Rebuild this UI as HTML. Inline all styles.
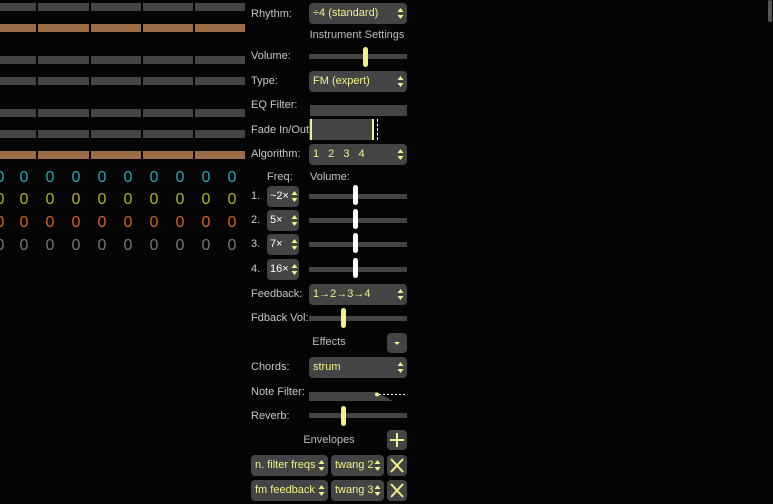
<!DOCTYPE html>
<html><head><meta charset="utf-8"><style>
*{margin:0;padding:0;box-sizing:border-box}
body{width:773px;height:500px;background:#040404;position:relative;overflow:hidden;font-family:"Liberation Sans",sans-serif;font-size:11px;color:#bdbdbd;white-space:nowrap}
.a{position:absolute}
.bar{position:absolute;height:8px;background:#444}
.br{background:#9a6d47}
.d{position:absolute;width:20px;text-align:center;font-size:16px;line-height:16px}
.lbl{position:absolute;left:251px;color:#c8c8c8;font-size:11px;line-height:14px}
.sel{position:absolute;background:#444;border-radius:4px;color:#f2f28c;font-size:11px;line-height:21px;padding-left:4px;height:21px;overflow:hidden}
.sel .ar{position:absolute;right:3px;top:4px;width:7px;height:13px}
.track{position:absolute;left:309px;width:98px;height:5px;background:#444}
.th{position:absolute;width:5px;height:20px;border-radius:3px;background:#f2f28c}
.wt{background:#fff}
.btn{position:absolute;left:387px;width:20px;height:20px;background:#444;border-radius:4px}
.ct{position:absolute;text-align:center;color:#bdbdbd}
</style></head><body>
<div class="a" style="left:768px;top:0;width:4px;height:22px;background:#555;border-radius:2px"></div>

<div class="bar" style="left:0;width:36px;top:3px"></div><div class="bar" style="left:38px;width:51px;top:3px"></div><div class="bar" style="left:91px;width:50px;top:3px"></div><div class="bar" style="left:143px;width:50px;top:3px"></div><div class="bar" style="left:195px;width:50px;top:3px"></div>
<div class="bar br" style="left:0;width:36px;top:24px"></div><div class="bar br" style="left:38px;width:51px;top:24px"></div><div class="bar br" style="left:91px;width:50px;top:24px"></div><div class="bar br" style="left:143px;width:50px;top:24px"></div><div class="bar br" style="left:195px;width:50px;top:24px"></div>
<div class="bar" style="left:0;width:36px;top:56px"></div><div class="bar" style="left:38px;width:51px;top:56px"></div><div class="bar" style="left:91px;width:50px;top:56px"></div><div class="bar" style="left:143px;width:50px;top:56px"></div><div class="bar" style="left:195px;width:50px;top:56px"></div>
<div class="bar" style="left:0;width:36px;top:77px"></div><div class="bar" style="left:38px;width:51px;top:77px"></div><div class="bar" style="left:91px;width:50px;top:77px"></div><div class="bar" style="left:143px;width:50px;top:77px"></div><div class="bar" style="left:195px;width:50px;top:77px"></div>
<div class="bar" style="left:0;width:36px;top:109px"></div><div class="bar" style="left:38px;width:51px;top:109px"></div><div class="bar" style="left:91px;width:50px;top:109px"></div><div class="bar" style="left:143px;width:50px;top:109px"></div><div class="bar" style="left:195px;width:50px;top:109px"></div>
<div class="bar" style="left:0;width:36px;top:130px"></div><div class="bar" style="left:38px;width:51px;top:130px"></div><div class="bar" style="left:91px;width:50px;top:130px"></div><div class="bar" style="left:143px;width:50px;top:130px"></div><div class="bar" style="left:195px;width:50px;top:130px"></div>
<div class="bar br" style="left:0;width:36px;top:151px"></div><div class="bar br" style="left:38px;width:51px;top:151px"></div><div class="bar br" style="left:91px;width:50px;top:151px"></div><div class="bar br" style="left:143px;width:50px;top:151px"></div><div class="bar br" style="left:195px;width:50px;top:151px"></div>

<div class="a" style="left:0;top:0">
<div class="d" style="left:-10px;top:170px;color:#26a6b8">0</div><div class="d" style="left:14px;top:170px;color:#26a6b8">0</div><div class="d" style="left:40px;top:170px;color:#26a6b8">0</div><div class="d" style="left:66px;top:170px;color:#26a6b8">0</div><div class="d" style="left:92px;top:170px;color:#26a6b8">0</div><div class="d" style="left:118px;top:170px;color:#26a6b8">0</div><div class="d" style="left:144px;top:170px;color:#26a6b8">0</div><div class="d" style="left:170px;top:170px;color:#26a6b8">0</div><div class="d" style="left:196px;top:170px;color:#26a6b8">0</div><div class="d" style="left:222px;top:170px;color:#26a6b8">0</div>
<div class="d" style="left:-10px;top:192px;color:#b0b41e">0</div><div class="d" style="left:14px;top:192px;color:#b0b41e">0</div><div class="d" style="left:40px;top:192px;color:#b0b41e">0</div><div class="d" style="left:66px;top:192px;color:#b0b41e">0</div><div class="d" style="left:92px;top:192px;color:#b0b41e">0</div><div class="d" style="left:118px;top:192px;color:#b0b41e">0</div><div class="d" style="left:144px;top:192px;color:#b0b41e">0</div><div class="d" style="left:170px;top:192px;color:#b0b41e">0</div><div class="d" style="left:196px;top:192px;color:#b0b41e">0</div><div class="d" style="left:222px;top:192px;color:#b0b41e">0</div>
<div class="d" style="left:-10px;top:215px;color:#d8621c">0</div><div class="d" style="left:14px;top:215px;color:#d8621c">0</div><div class="d" style="left:40px;top:215px;color:#d8621c">0</div><div class="d" style="left:66px;top:215px;color:#d8621c">0</div><div class="d" style="left:92px;top:215px;color:#d8621c">0</div><div class="d" style="left:118px;top:215px;color:#d8621c">0</div><div class="d" style="left:144px;top:215px;color:#d8621c">0</div><div class="d" style="left:170px;top:215px;color:#d8621c">0</div><div class="d" style="left:196px;top:215px;color:#d8621c">0</div><div class="d" style="left:222px;top:215px;color:#d8621c">0</div>
<div class="d" style="left:-10px;top:238px;color:#777">0</div><div class="d" style="left:14px;top:238px;color:#777">0</div><div class="d" style="left:40px;top:238px;color:#777">0</div><div class="d" style="left:66px;top:238px;color:#777">0</div><div class="d" style="left:92px;top:238px;color:#777">0</div><div class="d" style="left:118px;top:238px;color:#777">0</div><div class="d" style="left:144px;top:238px;color:#777">0</div><div class="d" style="left:170px;top:238px;color:#777">0</div><div class="d" style="left:196px;top:238px;color:#777">0</div><div class="d" style="left:222px;top:238px;color:#777">0</div>
</div>

<svg width="0" height="0" style="position:absolute"><defs><symbol id="ud" viewBox="0 0 7 13"><path d="M0.5 5 L3.5 1 L6.5 5Z M0.5 8 L3.5 12 L6.5 8Z" fill="#f2f28c"/></symbol></defs></svg>

<div class="lbl" style="top:7px">Rhythm:</div>
<div class="sel" style="left:309px;top:3px;width:98px">÷4 (standard)<svg class="ar"><use href="#ud"/></svg></div>
<div class="ct" style="left:297px;width:120px;top:29px">Instrument Settings</div>
<div class="lbl" style="top:49px">Volume:</div>
<div class="track" style="top:54px"></div><div class="th" style="left:363px;top:47px"></div>
<div class="lbl" style="top:74px">Type:</div>
<div class="sel" style="left:309px;top:71px;width:98px">FM (expert)<svg class="ar"><use href="#ud"/></svg></div>
<div class="lbl" style="top:98px">EQ Filter:</div>
<div class="a" style="left:310px;top:105px;width:97px;height:11px;background:#444"></div>
<div class="lbl" style="top:123px">Fade In/Out:</div>
<div class="a" style="left:309px;top:119px;width:65px;height:21px;background:#444"></div>
<div class="a" style="left:310px;top:119px;width:2px;height:21px;background:#f2f28c"></div>
<div class="a" style="left:372px;top:119px;width:2px;height:21px;background:#f2f28c"></div>
<div class="a" style="left:377px;top:119px;width:0;height:21px;border-left:1px dashed #fff"></div>
<div class="lbl" style="top:147px">Algorithm:</div>
<div class="sel" style="left:309px;top:144px;width:98px;word-spacing:6px">1 2 3 4<svg class="ar"><use href="#ud"/></svg></div>

<div class="a" style="left:267px;top:171px;color:#c8c8c8">Freq:</div>
<div class="a" style="left:310px;top:171px;color:#c8c8c8">Volume:</div>

<div class="lbl" style="top:189px">1.</div>
<div class="sel" style="left:267px;top:186px;width:32px;padding-left:3px;color:#fff">~2×<svg class="ar" style="right:1px"><use href="#ud"/></svg></div>
<div class="track" style="top:194px"></div><div class="th wt" style="left:353px;top:185px"></div>
<div class="lbl" style="top:213px">2.</div>
<div class="sel" style="left:267px;top:210px;width:32px;padding-left:3px;color:#fff">5×<svg class="ar" style="right:1px"><use href="#ud"/></svg></div>
<div class="track" style="top:218px"></div><div class="th wt" style="left:353px;top:209px"></div>
<div class="lbl" style="top:237px">3.</div>
<div class="sel" style="left:267px;top:234px;width:32px;padding-left:3px;color:#fff">7×<svg class="ar" style="right:1px"><use href="#ud"/></svg></div>
<div class="track" style="top:242px"></div><div class="th wt" style="left:353px;top:233px"></div>
<div class="lbl" style="top:262px">4.</div>
<div class="sel" style="left:267px;top:259px;width:32px;padding-left:3px;color:#fff">16×<svg class="ar" style="right:1px"><use href="#ud"/></svg></div>
<div class="track" style="top:267px"></div><div class="th wt" style="left:353px;top:258px"></div>

<div class="lbl" style="top:287px">Feedback:</div>
<div class="sel" style="left:309px;top:284px;width:98px">1→2→3→4<svg class="ar"><use href="#ud"/></svg></div>
<div class="lbl" style="top:311px">Fdback Vol:</div>
<div class="track" style="top:316px"></div><div class="th" style="left:341px;top:308px"></div>

<div class="ct" style="left:300px;width:58px;top:336px">Effects</div>
<div class="btn" style="top:333px"><svg width="20" height="20"><path d="M7 9 L13 9 L10 12Z" fill="#f2f28c"/></svg></div>
<div class="lbl" style="top:360px">Chords:</div>
<div class="sel" style="left:309px;top:357px;width:98px">strum<svg class="ar"><use href="#ud"/></svg></div>
<div class="lbl" style="top:385px">Note Filter:</div>
<svg class="a" style="left:309px;top:390px" width="100" height="14"><path d="M0 2 L67 2 L84 11 L0 11Z" fill="#444"/><line x1="70" y1="4.5" x2="98" y2="4.5" stroke="#fff" stroke-dasharray="2 2"/><circle cx="68" cy="4.5" r="2" fill="#f2f28c"/></svg>
<div class="lbl" style="top:409px">Reverb:</div>
<div class="track" style="top:413px"></div><div class="th" style="left:341px;top:406px"></div>

<div class="ct" style="left:295px;width:68px;top:434px">Envelopes</div>
<div class="btn" style="top:430px"><svg width="20" height="20"><path d="M10 3V17M3 10H17" stroke="#f2f28c" stroke-width="2"/></svg></div>

<div class="sel" style="left:251px;top:455px;width:77px">n. filter freqs<svg class="ar"><use href="#ud"/></svg></div>
<div class="sel" style="left:331px;top:455px;width:53px">twang 2<svg class="ar"><use href="#ud"/></svg></div>
<div class="btn" style="top:455px;height:21px"><svg width="20" height="21"><path d="M4 4L16 17M16 4L4 17" stroke="#f2f28c" stroke-width="2"/></svg></div>
<div class="sel" style="left:251px;top:480px;width:77px">fm feedback<svg class="ar"><use href="#ud"/></svg></div>
<div class="sel" style="left:331px;top:480px;width:53px">twang 3<svg class="ar"><use href="#ud"/></svg></div>
<div class="btn" style="top:480px;height:21px"><svg width="20" height="21"><path d="M4 4L16 17M16 4L4 17" stroke="#f2f28c" stroke-width="2"/></svg></div>
</body></html>
